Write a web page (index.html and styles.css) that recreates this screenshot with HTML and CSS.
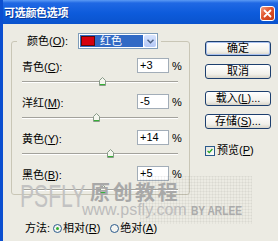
FILE: index.html
```html
<!DOCTYPE html>
<html lang="zh-CN">
<head>
  <meta charset="UTF-8">
  <title>可选颜色选项</title>
  <link rel="stylesheet" href="styles.css">
</head>
<body>
  <div class="window">

    <!-- 标题栏 -->
    <div class="titlebar">
      <span class="title">可选颜色选项</span>
      <span class="close">
        <svg width="15" height="15" viewBox="0 0 15 15">
          <defs>
            <linearGradient id="cg" x1="0" y1="0" x2="1" y2="1">
              <stop offset="0" stop-color="#f3a48a"/>
              <stop offset="0.45" stop-color="#e0532c"/>
              <stop offset="1" stop-color="#c23a14"/>
            </linearGradient>
          </defs>
          <rect x="0.5" y="0.5" width="14" height="14" rx="2.5" fill="url(#cg)" stroke="#fff"/>
          <path d="M4.5 4.5 L10.5 10.5 M10.5 4.5 L4.5 10.5" stroke="#fff" stroke-width="1.8" stroke-linecap="round"/>
        </svg>
      </span>
    </div>

    <div class="content">
      <div class="main">
        <fieldset class="group">
          <legend class="group-head">
            <span class="head-label">颜色(<u>O</u>):</span>
            <span class="select">
              <span class="select-value"><span class="swatch"></span>红色</span>
              <span class="select-arrow">
                <svg width="7" height="5" viewBox="0 0 7 5"><path d="M0.5 0.8 L3.5 3.8 L6.5 0.8" fill="none" stroke="#4d6185" stroke-width="1.5"/></svg>
              </span>
            </span>
          </legend>

          <div class="row">
            <div class="row-top">
              <span class="row-label">青色(<u>C</u>):</span>
              <span class="field">+3</span>
              <span class="pct">%</span>
            </div>
            <div class="slider"><span class="thumb" style="left: 77px"></span></div>
          </div>

          <div class="row">
            <div class="row-top">
              <span class="row-label">洋红(<u>M</u>):</span>
              <span class="field">-5</span>
              <span class="pct">%</span>
            </div>
            <div class="slider"><span class="thumb" style="left: 71px"></span></div>
          </div>

          <div class="row">
            <div class="row-top">
              <span class="row-label">黄色(<u>Y</u>):</span>
              <span class="field">+14</span>
              <span class="pct">%</span>
            </div>
            <div class="slider"><span class="thumb" style="left: 85px"></span></div>
          </div>

          <div class="row">
            <div class="row-top">
              <span class="row-label">黑色(<u>B</u>):</span>
              <span class="field">+5</span>
              <span class="pct">%</span>
            </div>
            <div class="slider"><span class="thumb" style="left: 78px"></span></div>
          </div>
        </fieldset>

        <div class="method">
          <span class="method-label">方法:</span>
          <span class="radio on"></span><span class="radio-text">相对(<u>R</u>)</span>
          <span class="radio"></span><span class="radio-text">绝对(<u>A</u>)</span>
        </div>
      </div>

      <div class="side">
        <button class="btn btn-default">确定</button>
        <button class="btn">取消</button>
        <button class="btn btn-gap">载入(<u>L</u>)...</button>
        <button class="btn">存储(<u>S</u>)...</button>
        <label class="check">
          <span class="box">
            <svg width="10" height="10" viewBox="0 0 10 10"><path d="M2 4.8 L4 7 L8 2.6" fill="none" stroke="#21a121" stroke-width="1.7"/></svg>
          </span>
          预览(<u>P</u>)
        </label>
      </div>
    </div>

    <!-- 水印 -->
    <div class="wm-grid"></div>
    <div class="wm-logo">PSFLY</div>
    <div class="wm-cn">原创教程</div>
    <div class="wm-url">www.psfly.com</div>
    <div class="wm-by">BY ARLEE</div>
  </div>
</body>
</html>
```

FILE: styles.css
```css
body {
  margin: 0;
  background: #ecebe3;
  font-family: "Liberation Sans", "Noto Sans CJK SC", sans-serif;
  font-size: 11px;
  color: #000;
}

u { text-decoration: underline; text-underline-offset: 1px; }

.window {
  position: relative;
  height: 241px;
  border-left: 3px solid #0b4fd0;
  overflow: hidden;
}

/* 标题栏 */
.titlebar {
  height: 24px;
  display: flex;
  align-items: center;
  justify-content: space-between;
  padding: 0 3px 0 1px;
  background: linear-gradient(#5b9af4, #2068e4 3px, #0d5bdb 55%, #0a53cd);
  color: #fff;
}

.title {
  font-weight: bold;
  font-size: 11px;
  letter-spacing: -0.3px;
  text-shadow: 1px 1px 0 #0a3a9c;
}

.close { display: flex; margin-top: 2px; }

/* 主体 */
.content {
  display: flex;
  padding-left: 8px;
}

.main { width: 179px; }

.group {
  margin: 9px 0 0;
  padding: 9px 7px 1px 10px;
  border: 1px solid #c9c6b6;
  border-radius: 3px;
}

.group-head {
  margin-left: -5px;
  padding: 0 3px 0 10px;
  height: 16px;
  line-height: 16px;
}

.head-label { vertical-align: top; }

.select {
  display: inline-flex;
  vertical-align: top;
  width: 80px;
  height: 16px;
  margin-left: 7px;
  box-sizing: border-box;
  border: 1px solid #7f9db9;
  background: #fff;
  padding: 1px;
}

.select-value {
  flex: 1;
  display: flex;
  align-items: center;
  background: #316ac5;
  color: #fff;
  padding-left: 1px;
  line-height: 12px;
}

.swatch {
  width: 12px;
  height: 8px;
  background: #d6000f;
  border: 1px solid #5a0a0a;
  margin-right: 5px;
}

.select-arrow {
  width: 12px;
  margin-left: 1px;
  display: flex;
  align-items: center;
  justify-content: center;
  background: linear-gradient(#d6e3fd, #b4c8f6);
  border-radius: 2px;
}

.row { margin-bottom: 9px; }
.row:last-child { margin-bottom: 0; }

.row-top {
  display: flex;
  align-items: center;
  height: 15px;
}

.row-label { flex: 1; }

.field {
  width: 32px;
  height: 15px;
  box-sizing: border-box;
  border: 1px solid #a2adb8;
  background: #fff;
  padding-left: 2px;
  line-height: 13px;
}

.pct { margin-left: 3px; width: 10px; }

.slider {
  position: relative;
  width: 156px;
  height: 12px;
}

.slider::before {
  content: '';
  position: absolute;
  left: 0;
  right: 0;
  top: 8px;
  height: 1px;
  background: #a3a29c;
  border-bottom: 1px solid #fff;
}

.thumb {
  position: absolute;
  top: 4px;
  width: 7px;
  height: 9px;
  background: url("data:image/svg+xml,%3Csvg xmlns='http://www.w3.org/2000/svg' width='7' height='9'%3E%3Cpath d='M0.5 3.5 L3.5 0.5 L6.5 3.5 V8.5 H0.5 Z' fill='%23f4f6ee' stroke='%23889a88'/%3E%3Cpath d='M1 7.5 H6' stroke='%2335b135'/%3E%3C/svg%3E");
}

.method {
  display: flex;
  align-items: center;
  margin-top: 27px;
  padding-left: 14px;
  line-height: 13px;
}

.method-label { margin-right: 3px; }

.radio {
  width: 9px;
  height: 9px;
  box-sizing: border-box;
  border: 1px solid #2a5a8c;
  border-radius: 50%;
  background: #f4f4f0;
  margin-right: 1px;
  position: relative;
}

.radio.on::after {
  content: '';
  position: absolute;
  left: 2px;
  top: 2px;
  width: 3px;
  height: 3px;
  border-radius: 50%;
  background: #2fb02f;
}

.radio-text { margin-right: 10px; }

/* 按钮 */
.side {
  display: flex;
  flex-direction: column;
  margin-left: 15px;
  padding-top: 17px;
}

.btn {
  width: 66px;
  height: 15px;
  padding: 0;
  margin: 0 0 8px;
  border: 1px solid #1d3f6e;
  border-radius: 3px;
  background: linear-gradient(#ffffff, #f1f0ea 70%, #d9d5c9);
  font-family: "Liberation Sans", "Noto Sans CJK SC", sans-serif;
  font-size: 11px;
  line-height: 13px;
  color: #000;
}

.btn-default { box-shadow: inset 0 0 0 1px #a9c1ef; }
.btn-gap { margin-top: 4px; }

.check {
  display: flex;
  align-items: center;
  margin-top: 7px;
  line-height: 13px;
}

.box {
  display: flex;
  width: 10px;
  height: 10px;
  box-sizing: border-box;
  border: 1px solid #2a5a8c;
  background: linear-gradient(135deg, #e4e3dc, #fff);
  margin-right: 2px;
  align-items: center;
  justify-content: center;
}

.box svg { width: 8px; height: 8px; }

/* 水印 */
.wm-grid {
  position: absolute;
  left: 137px;
  top: 176px;
  width: 112px;
  height: 48px;
  background-image:
    linear-gradient(90deg, rgba(0, 0, 0, 0.04) 1px, transparent 1px),
    linear-gradient(rgba(0, 0, 0, 0.04) 1px, transparent 1px);
  background-size: 3px 3px;
}

.wm-logo {
  position: absolute;
  left: 17px;
  top: 185px;
  font-size: 32px;
  line-height: 23px;
  color: #c2c2c2;
  transform: scaleX(0.66);
  transform-origin: left top;
}

.wm-cn {
  position: absolute;
  left: 87px;
  top: 182px;
  font-family: "Noto Sans CJK SC", sans-serif;
  font-weight: bold;
  font-size: 20px;
  line-height: 20px;
  letter-spacing: 2.5px;
  color: #a8a8a8;
}

.wm-url {
  position: absolute;
  left: 79px;
  top: 203px;
  font-size: 16px;
  line-height: 14px;
  color: #bcbcbc;
}

.wm-by {
  position: absolute;
  left: 188px;
  top: 204px;
  font-size: 12px;
  line-height: 14px;
  font-weight: bold;
  color: #ababab;
  transform: scaleX(0.85);
  transform-origin: left top;
}
```
